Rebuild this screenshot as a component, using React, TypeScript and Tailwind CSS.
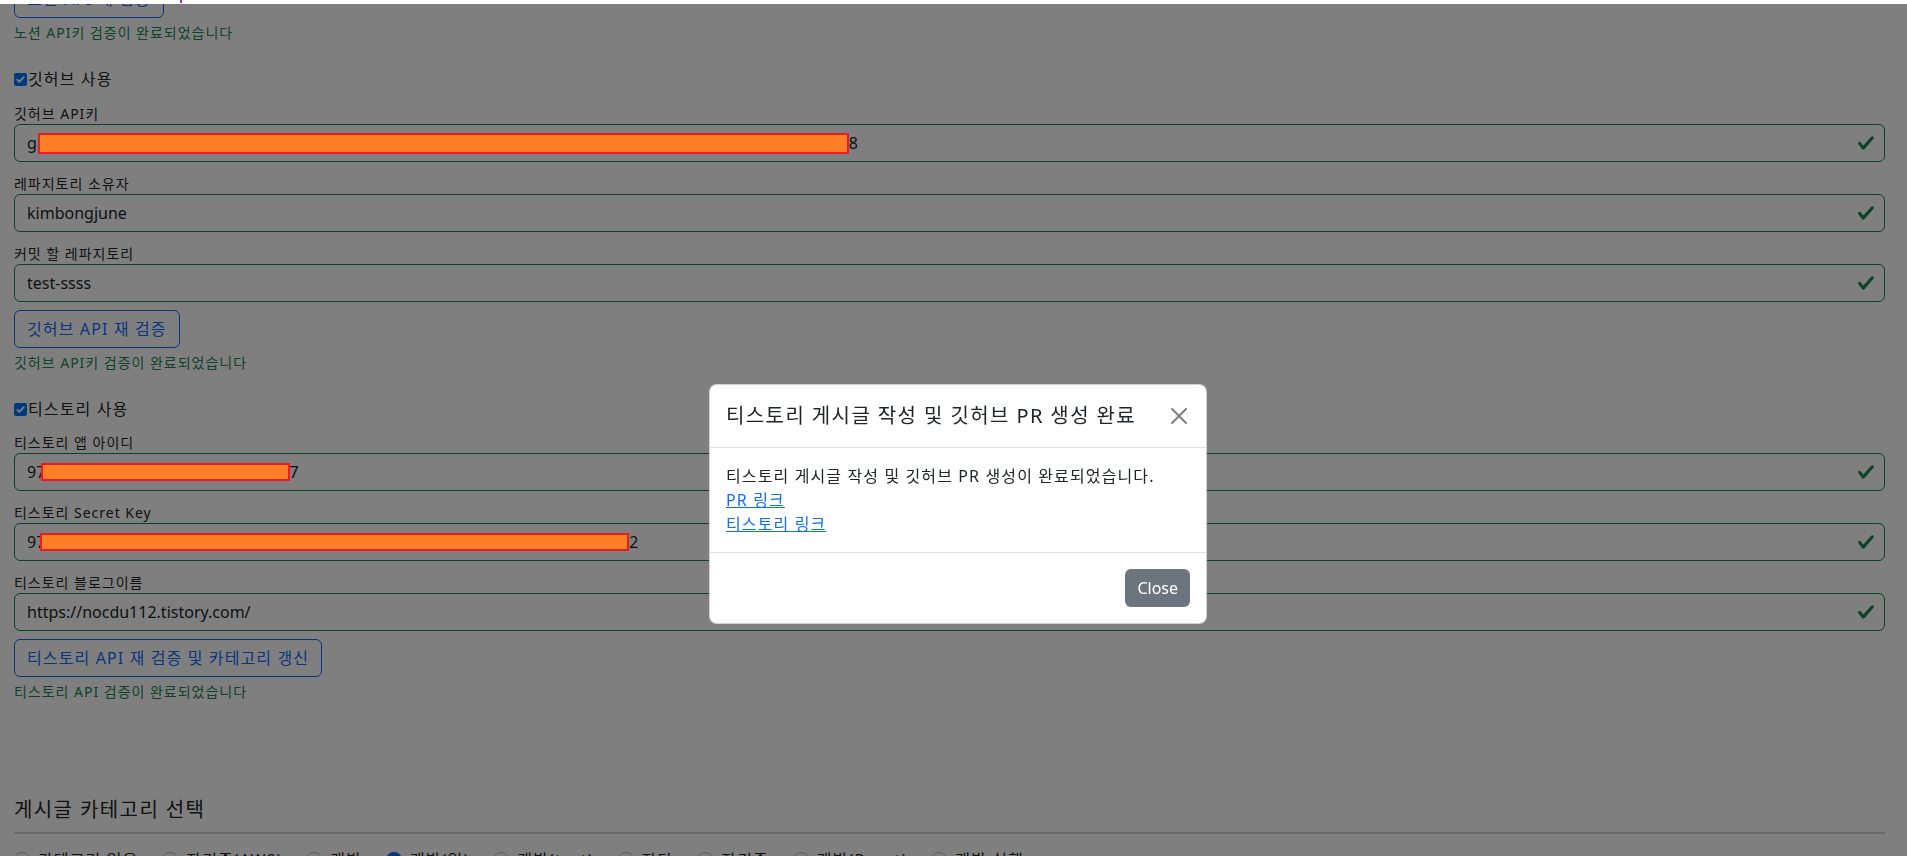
import React from 'react';

const FONT = "font-['Noto_Sans','Noto_Sans_CJK_KR',sans-serif]";

function ValidIcon() {
  return (
    <svg viewBox="0 0 8 8" className="absolute right-[9px] top-[9px] h-[18px] w-[18px]">
      <path
        fill="#198754"
        d="M2.3 6.73.6 4.53c-.4-1.04.46-1.4 1.1-.8l1.1 1.4 3.4-3.8c.6-.63 1.6-.27 1.2.7l-4 4.6c-.43.5-.8.4-1.1.1z"
      />
    </svg>
  );
}

function Field({ label, children }: { label: string; children: React.ReactNode }) {
  return (
    <div>
      <div className="text-sm leading-[21px] tracking-[0.07em] text-[#212529]">{label}</div>
      <div className="relative flex h-[38px] items-center whitespace-nowrap rounded-md border border-[#198754] bg-white pl-3 pr-9 text-base text-[#212529]">
        {children}
        <ValidIcon />
      </div>
    </div>
  );
}

// paint-style redaction box, drawn over the modal backdrop
function Redact({ className }: { className: string }) {
  return <span className={`relative z-50 inline-block border-2 border-[#ed1c24] bg-[#ff7f27] ${className}`} />;
}

function CheckLine({ label }: { label: string }) {
  return (
    <div className="flex h-6 items-center text-base text-[#212529]">
      <span className="flex h-[13px] w-[13px] items-center justify-center rounded-[2px] bg-[#0075ff]">
        <svg viewBox="0 0 12 12" className="h-[11px] w-[11px]">
          <path d="M2.5 6.2l2.3 2.3 4.7-5" fill="none" stroke="white" strokeWidth="2" strokeLinecap="round" strokeLinejoin="round" />
        </svg>
      </span>
      <span className="ml-px tracking-[0.07em]">{label}</span>
    </div>
  );
}

function OutlineButton({ children }: { children: React.ReactNode }) {
  return (
    <button className="h-[38px] rounded-md border border-[#0d6efd] px-3 text-base tracking-[0.07em] text-[#0d6efd]">
      {children}
    </button>
  );
}

function Feedback({ children }: { children: React.ReactNode }) {
  return <div className="mt-1 text-sm leading-[21px] tracking-[0.07em] text-[#198754]">{children}</div>;
}

const categories = [
  { name: '카테고리 없음' },
  { name: '자격증(AWS)' },
  { name: '개발' },
  { name: '개발(일)', checked: true },
  { name: '개발(test)' },
  { name: '잡담' },
  { name: '자격증' },
  { name: '개발(React)' },
  { name: '개발 실행' },
];

export default function App() {
  return (
    <div className={`relative h-screen overflow-hidden bg-white ${FONT}`}>
      <div className="-mt-[20px] pl-[14px] pr-[22px]">
        {/* Notion */}
        <OutlineButton>노션 API 재 검증</OutlineButton>
        <Feedback>노션 API키 검증이 완료되었습니다</Feedback>

        {/* GitHub */}
        <div className="mt-6">
          <CheckLine label="깃허브 사용" />
          <div className="mt-3 flex flex-col gap-[11px]">
            <Field label="깃허브 API키">
              <span>g</span>
              <Redact className="ml-px h-[21px] w-[811px]" />
              <span>8</span>
            </Field>
            <Field label="레파지토리 소유자">kimbongjune</Field>
            <Field label="커밋 할 레파지토리">test-ssss</Field>
          </div>
          <div className="mt-2">
            <OutlineButton>깃허브 API 재 검증</OutlineButton>
          </div>
          <Feedback>깃허브 API키 검증이 완료되었습니다</Feedback>
        </div>

        {/* Tistory */}
        <div className="mt-6">
          <CheckLine label="티스토리 사용" />
          <div className="mt-[11px] flex flex-col gap-[11px]">
            <Field label="티스토리 앱 아이디">
              <span>97</span>
              <Redact className="-ml-[4px] h-[18px] w-[249px]" />
              <span className="-ml-[10px]">67</span>
            </Field>
            <Field label="티스토리 Secret Key">
              <span>97</span>
              <Redact className="-ml-[5px] h-[18px] w-[589px]" />
              <span>2</span>
            </Field>
            <Field label="티스토리 블로그이름">https://nocdu112.tistory.com/</Field>
          </div>
          <div className="mt-2">
            <OutlineButton>티스토리 API 재 검증 및 카테고리 갱신</OutlineButton>
          </div>
          <Feedback>티스토리 API 검증이 완료되었습니다</Feedback>
        </div>

        {/* Category */}
        <div className="mt-[96px] text-xl leading-6 tracking-[0.07em] text-[#212529]">게시글 카테고리 선택</div>
        <div className="mt-[10px] border-t-2 border-[#d5d5d5]" />
        <div className="mt-[14px] flex items-center gap-6 text-base leading-6 tracking-[0.07em] text-[#212529]">
          {categories.map((c) => (
            <label key={c.name} className="flex items-center gap-2">
              {c.checked ? (
                <span className="flex h-4 w-4 items-center justify-center rounded-full bg-[#0d6efd]">
                  <span className="h-[6px] w-[6px] rounded-full bg-white" />
                </span>
              ) : (
                <span className="h-4 w-4 rounded-full border border-[#bfbfbf] bg-white" />
              )}
              <span>{c.name}</span>
            </label>
          ))}
        </div>
      </div>

      {/* modal backdrop */}
      <div className="fixed inset-0 z-40 bg-black/50" />

      {/* browser strip at top */}
      <div className="fixed left-0 top-0 z-50 h-[4px] w-full bg-white">
        <div className="ml-[180px] h-[3px] w-[2px] bg-[#9b30c8]" />
      </div>

      {/* modal */}
      <div className="fixed left-[709px] top-[384px] z-50 w-[498px] rounded-lg border border-black/[.175] bg-white text-[#212529]">
        <div className="flex items-center justify-between border-b border-[#dee2e6] p-4">
          <div className="text-xl leading-[30px] tracking-[0.07em]">티스토리 게시글 작성 및 깃허브 PR 생성 완료</div>
          <button className="-mr-px flex h-6 w-6 items-center justify-center">
            <svg viewBox="0 0 16 16" className="h-4 w-4 opacity-50">
              <path d="M.293.293a1 1 0 0 1 1.414 0L8 6.586 14.293.293a1 1 0 1 1 1.414 1.414L9.414 8l6.293 6.293a1 1 0 0 1-1.414 1.414L8 9.414l-6.293 6.293a1 1 0 0 1-1.414-1.414L6.586 8 .293 1.707a1 1 0 0 1 0-1.414z" />
            </svg>
          </button>
        </div>
        <div className="p-4 text-base leading-6 tracking-[0.07em]">
          <div>티스토리 게시글 작성 및 깃허브 PR 생성이 완료되었습니다.</div>
          <a href="#" className="block w-fit text-[#0d6efd] underline">PR 링크</a>
          <a href="#" className="block w-fit text-[#0d6efd] underline">티스토리 링크</a>
        </div>
        <div className="flex justify-end border-t border-[#dee2e6] p-3">
          <button className="m-1 h-[38px] rounded-md bg-[#6c757d] px-3 text-base text-white">Close</button>
        </div>
      </div>
    </div>
  );
}
